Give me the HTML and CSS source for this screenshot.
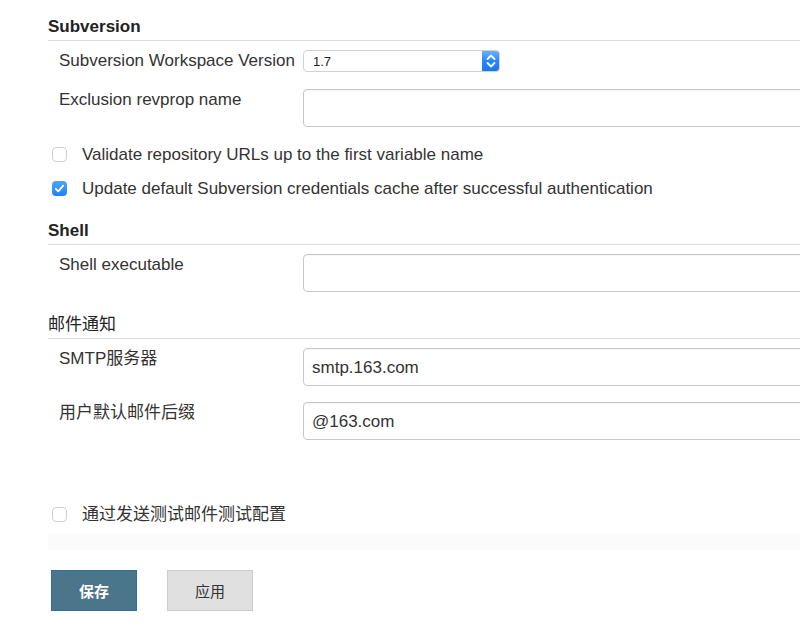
FILE: index.html
```html
<!DOCTYPE html>
<html lang="zh-CN">
<head>
<meta charset="utf-8">
<title>配置</title>
<link rel="stylesheet" href="styles.css">
</head>
<body>
<div class="page">
  <section class="section">
    <h2 class="section-title">Subversion</h2>
    <div class="field field-first">
      <label class="field-label">Subversion Workspace Version</label>
      <div class="field-control">
        <div class="select">
          <span class="select-value">1.7</span>
          <span class="select-arrow">
            <svg width="18" height="22" viewBox="0 0 18 22">
              <path d="M5.5 9 L9 5.5 L12.5 9" fill="none" stroke="#fff" stroke-width="1.8" stroke-linecap="round" stroke-linejoin="round"/>
              <path d="M5.5 13 L9 16.5 L12.5 13" fill="none" stroke="#fff" stroke-width="1.8" stroke-linecap="round" stroke-linejoin="round"/>
            </svg>
          </span>
        </div>
      </div>
    </div>
    <div class="field field-next">
      <label class="field-label">Exclusion revprop name</label>
      <div class="field-control"><input class="text-input" type="text" value=""></div>
    </div>
    <label class="check-row check-a"><span class="checkbox"></span><span class="check-text">Validate repository URLs up to the first variable name</span></label>
    <label class="check-row check-b"><span class="checkbox checked"><svg width="15" height="15" viewBox="0 0 15 15"><path d="M3.8 7.8 L6.3 10.3 L11.2 4.6" fill="none" stroke="#fff" stroke-width="1.8" stroke-linecap="round" stroke-linejoin="round"/></svg></span><span class="check-text">Update default Subversion credentials cache after successful authentication</span></label>
  </section>

  <section class="section section-later">
    <h2 class="section-title">Shell</h2>
    <div class="field field-first">
      <label class="field-label">Shell executable</label>
      <div class="field-control"><input class="text-input" type="text" value=""></div>
    </div>
  </section>

  <section class="section section-later">
    <h2 class="section-title title-cjk">邮件通知</h2>
    <div class="field field-first">
      <label class="field-label">SMTP服务器</label>
      <div class="field-control"><input class="text-input" type="text" value="smtp.163.com"></div>
    </div>
    <div class="field field-mid">
      <label class="field-label">用户默认邮件后缀</label>
      <div class="field-control"><input class="text-input" type="text" value="@163.com"></div>
    </div>
    <label class="check-row check-c"><span class="checkbox"></span><span class="check-text">通过发送测试邮件测试配置</span></label>
    <div class="band"></div>
  </section>

  <div class="buttons">
    <button class="btn btn-primary" type="button">保存</button>
    <button class="btn btn-secondary" type="button">应用</button>
  </div>
</div>
</body>
</html>
```

FILE: styles.css
```css
html, body {
  margin: 0;
  padding: 0;
  background: #fff;
  overflow: hidden;
}

body {
  font-family: "Liberation Sans", "Noto Sans CJK SC", sans-serif;
  font-size: 17px;
  line-height: 20px;
  color: #333;
}

.page {
  width: 800px;
  height: 635px;
  box-sizing: border-box;
  padding: 16px 0 0 48px;
  overflow: hidden;
}

.section-later {
  margin-top: 22px;
}

.section-title {
  margin: 0;
  font-size: 17px;
  line-height: 20px;
  font-weight: bold;
  color: #222;
  padding: 1px 0 3px;
  border-bottom: 1px solid #dcdcdc;
}

.title-cjk {
  font-weight: normal;
  color: #222;
}

.field {
  display: grid;
  grid-template-columns: 255px 560px;
  align-items: start;
}

.field-first { margin-top: 9px; }
.field-next { margin-top: 17px; }
.field-mid { margin-top: 16px; }

.field-label {
  padding: 1px 0 0 11px;
  line-height: 20px;
  white-space: nowrap;
}

.field-control {
  display: flex;
}

.text-input {
  box-sizing: border-box;
  width: 560px;
  height: 38px;
  margin: 0;
  padding: 1px 8px 0;
  border: 1px solid #c8c8c8;
  border-radius: 4px;
  font-family: "Liberation Sans", "Noto Sans CJK SC", sans-serif;
  font-size: 17px;
  color: #333;
  background: #fff;
  box-shadow: inset 0 1px 1px rgba(0, 0, 0, 0.04);
}

.select {
  display: flex;
  width: 197px;
  height: 22px;
  box-sizing: border-box;
  border: 1px solid #d2d2d2;
  border-radius: 4px;
  background: #fff;
  overflow: hidden;
}

.select-value {
  flex: 1;
  font-size: 13px;
  line-height: 22px;
  padding-left: 9px;
  color: #222;
}

.select-arrow {
  width: 18px;
  height: 22px;
  margin: -1px -1px -1px 0;
  background: linear-gradient(#6db4fb, #2a86f7 50%, #1a76f2);
  border-radius: 0 4px 4px 0;
  display: flex;
}

.check-row {
  display: flex;
  align-items: flex-start;
  height: 20px;
  line-height: 20px;
  white-space: nowrap;
}

.check-text {
  padding-top: 1px;
}

.check-a { margin-top: 17px; }
.check-b { margin-top: 14px; }
.check-c { margin-top: 64px; }

.checkbox {
  box-sizing: border-box;
  width: 15px;
  height: 15px;
  margin: 3px 15px 0 4px;
  border: 1px solid #cfcfcf;
  border-radius: 4px;
  background: #fff;
  display: flex;
  flex-shrink: 0;
}

.checkbox.checked {
  border: none;
  background: linear-gradient(#4ea5fd, #1f82f5);
}

.band {
  margin-top: 9px;
  height: 17px;
  background: #fbfbfb;
}

.buttons {
  display: flex;
  gap: 30px;
  margin-top: 20px;
  padding-left: 3px;
}

.btn {
  box-sizing: border-box;
  width: 86px;
  height: 41px;
  margin: 0;
  font-family: "Liberation Sans", "Noto Sans CJK SC", sans-serif;
  font-size: 15px;
  border-radius: 0;
  cursor: pointer;
}

.btn-primary {
  background: #4b758b;
  border: 1px solid #2f6f98;
  color: #fff;
  font-weight: bold;
}

.btn-secondary {
  background: #e0e0e0;
  border: 1px solid #cbcbcb;
  color: #333;
}
```
